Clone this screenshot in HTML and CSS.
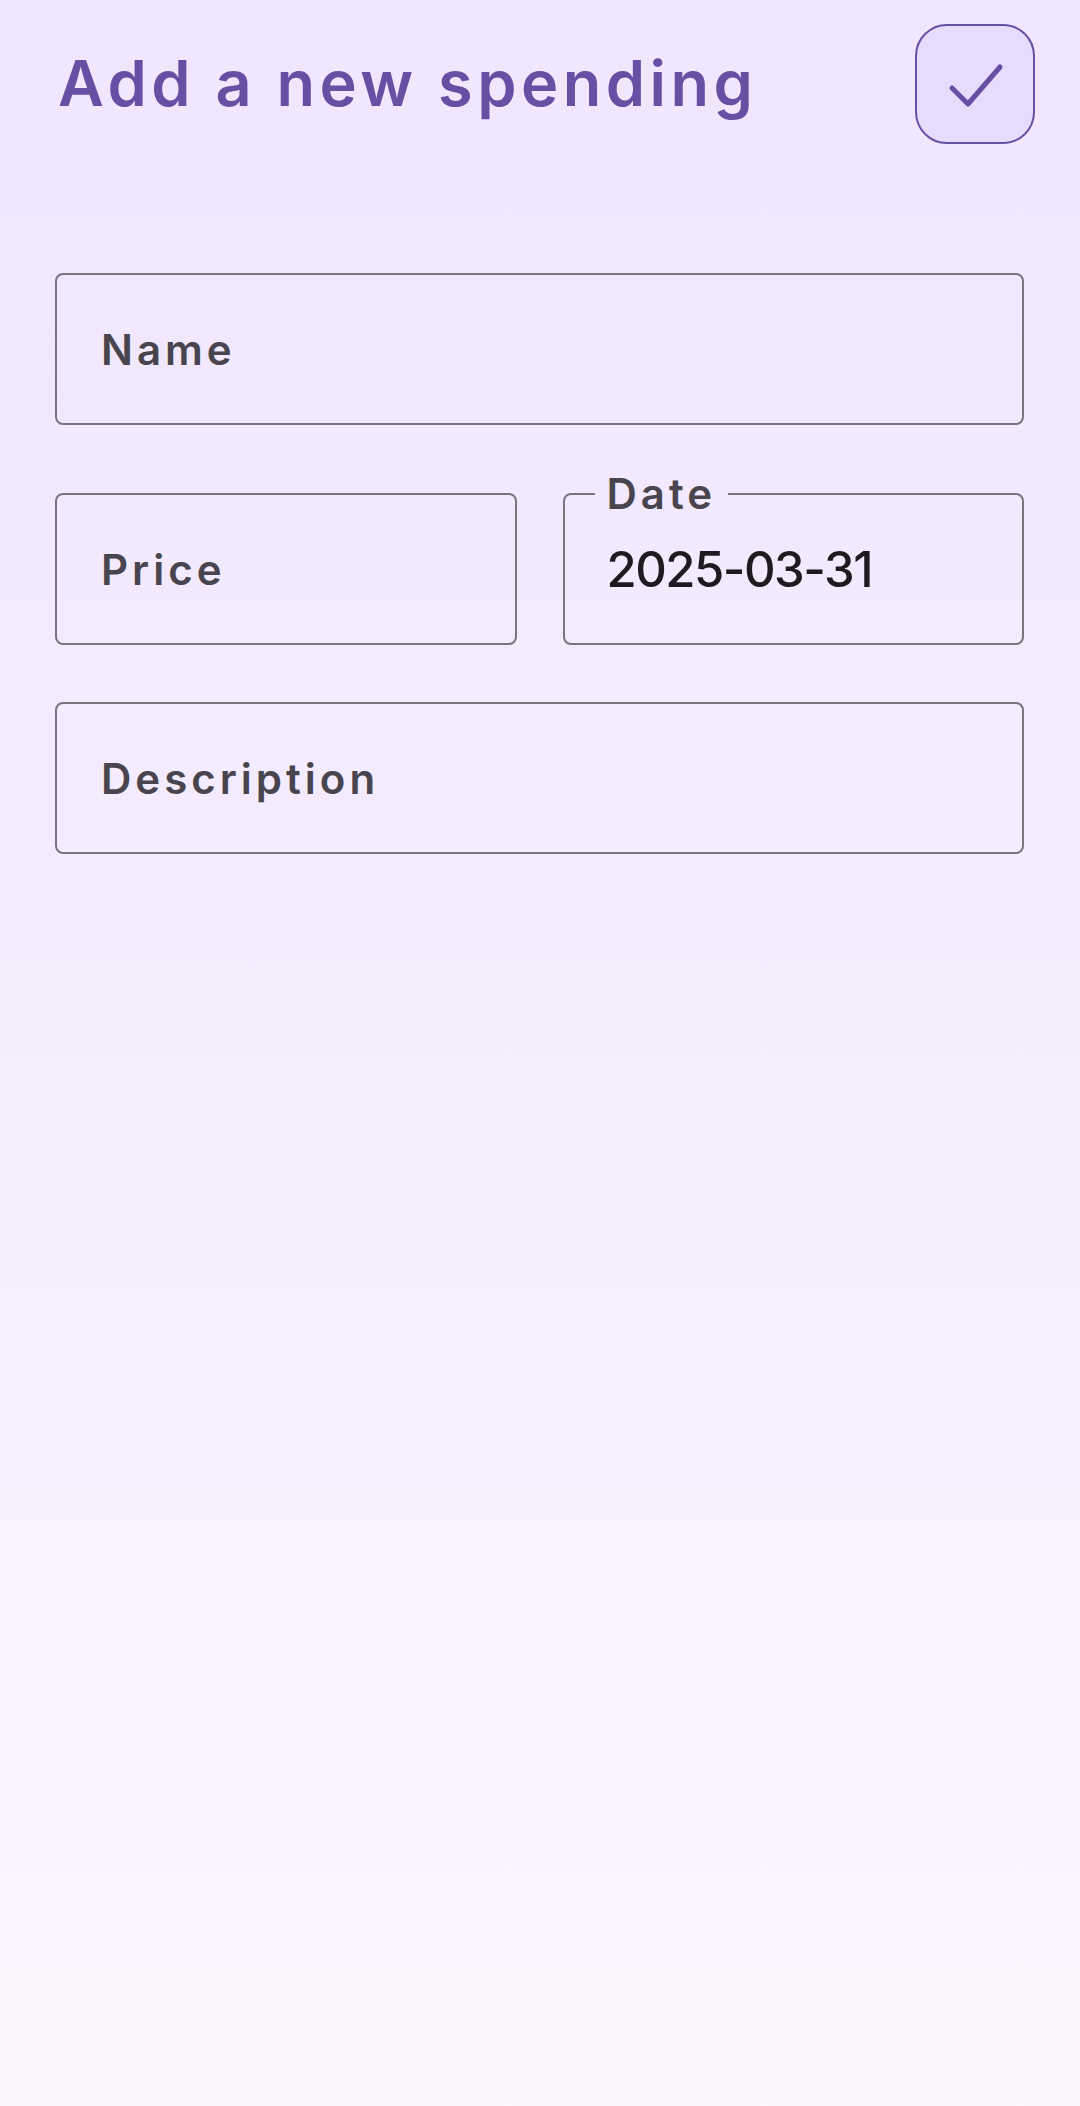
FILE: index.html
```html
<!DOCTYPE html>
<html lang="en">
<head>
<meta charset="utf-8">
<title>Add a new spending</title>
<link rel="stylesheet" href="styles.css">
</head>
<body>
<div class="page">
  <header class="header">
    <h1 class="title">Add a new spending</h1>
    <button class="save-btn" type="button" aria-label="Save">
      <svg class="save-icon" viewBox="0 0 116 116" width="116" height="116">
        <polyline points="35,62 51,78 83,41" fill="none" stroke="#6750A4" stroke-width="5" stroke-linecap="round" stroke-linejoin="round"/>
      </svg>
    </button>
  </header>
  <form class="form">
    <div class="field"><span class="placeholder">Name</span></div>
    <div class="row">
      <div class="field"><span class="placeholder">Price</span></div>
      <fieldset class="field-filled">
        <legend class="floating">Date</legend>
        <span class="value">2025-03-31</span>
      </fieldset>
    </div>
    <div class="field field-desc"><span class="placeholder">Description</span></div>
  </form>
</div>
</body>
</html>
```

FILE: styles.css
```css
* { box-sizing: border-box; }
html, body { margin: 0; padding: 0; }
body {
  min-height: 2106px;
  background: linear-gradient(180deg, #F0E6FE 0%, #F5EDFE 50%, #FCF6FE 100%);
  font-family: Inter, "Open Sans", "Liberation Sans", sans-serif;
}
.page { width: 1080px; }
.header {
  display: flex;
  justify-content: space-between;
  align-items: center;
  padding: 24px 45px 0 58px;
}
.title {
  margin: 0;
  font-size: 63px;
  font-weight: 600;
  line-height: 1.2;
  color: #6750A4;
  letter-spacing: 4.5px;
}
.save-btn {
  width: 120px;
  height: 120px;
  padding: 0;
  border: 2px solid #6750A4;
  border-radius: 32px;
  background: #E6DCFE;
  display: flex;
  align-items: center;
  justify-content: center;
}
.save-icon { display: block; }
.form {
  display: flex;
  flex-direction: column;
  margin-top: 129px;
  padding: 0 56px 0 55px;
}
.field {
  height: 152px;
  border: 2px solid #79747E;
  border-radius: 8px;
  display: flex;
  align-items: center;
  padding: 0 44px;
}
.placeholder {
  font-size: 42px;
  font-weight: 600;
  color: #49454F;
  letter-spacing: 4px;
}
.row {
  display: grid;
  grid-template-columns: 1fr 1fr;
  column-gap: 46px;
  align-items: end;
  margin-top: 48px;
}
.field-filled {
  margin: 0;
  min-width: 0;
  height: 172px;
  border: 2px solid #79747E;
  border-radius: 8px;
  padding: 30px 44px 0 30px;
}
.floating {
  padding: 0 12px;
  font-size: 42px;
  line-height: 42px;
  font-weight: 600;
  color: #49454F;
  letter-spacing: 4px;
}
.value {
  display: block;
  padding-left: 12px;
  font-size: 49px;
  line-height: 49px;
  font-weight: 500;
  color: #1D1B20;
  letter-spacing: -1.5px;
}
.field-desc { margin-top: 57px; }
```
